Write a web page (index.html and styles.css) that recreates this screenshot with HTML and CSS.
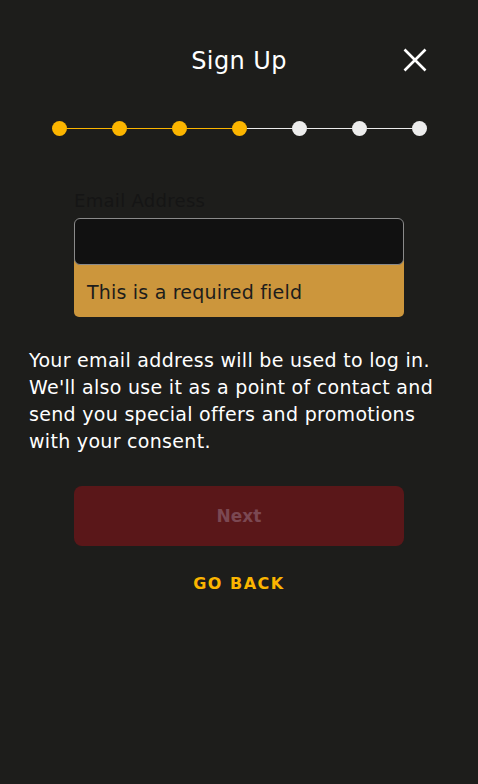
FILE: index.html
```html
<!DOCTYPE html>
<html lang="en">
<head>
    <meta charset="UTF-8">
    <meta name="viewport" content="width=device-width, initial-scale=1.0">
    <title>Sign Up</title>
    <link rel="stylesheet" href="styles.css">
</head>
<body>
    <div class="screen">
        <header class="top-bar">
            <h1 class="title">Sign Up</h1>
            <button class="close-btn" aria-label="Close">
                <svg width="24" height="24" viewBox="0 0 24 24">
                    <path d="M1.5 1.5 L22.5 22.5 M22.5 1.5 L1.5 22.5" stroke="#fff" stroke-width="2.6" stroke-linecap="butt" fill="none"/>
                </svg>
            </button>
        </header>

        <div class="stepper">
            <span class="dot done"></span>
            <span class="line done"></span>
            <span class="dot done"></span>
            <span class="line done"></span>
            <span class="dot done"></span>
            <span class="line done"></span>
            <span class="dot done"></span>
            <span class="line"></span>
            <span class="dot"></span>
            <span class="line"></span>
            <span class="dot"></span>
            <span class="line"></span>
            <span class="dot"></span>
        </div>

        <form class="form">
            <label class="field-label" for="email">Email Address</label>
            <div class="field">
                <input class="field-input" id="email" type="email">
                <div class="field-error">This is a required field</div>
            </div>
        </form>

        <p class="info">Your email address will be used to log in. We'll also use it as a point of contact and send you special offers and promotions with your consent.</p>

        <div class="actions">
            <button class="next-btn" disabled>Next</button>
            <a class="back-link" href="#">GO BACK</a>
        </div>
    </div>
</body>
</html>
```

FILE: styles.css
```css
body {
    margin: 0;
    background: #1d1d1b;
    font-family: 'DejaVu Sans', sans-serif;
    color: #fff;
}

.screen {
    min-height: 784px;
    box-sizing: border-box;
    padding: 0 29px;
}

.top-bar {
    height: 122px;
    position: relative;
    display: flex;
    justify-content: center;
    align-items: flex-start;
}

.title {
    margin: 45px 0 0;
    font-size: 24px;
    font-weight: 500;
    line-height: 32px;
    letter-spacing: 0.4px;
}

.close-btn {
    position: absolute;
    right: 22px;
    top: 48px;
    background: none;
    border: 0;
    padding: 0;
    width: 24px;
    height: 24px;
    cursor: pointer;
}

.stepper {
    display: flex;
    align-items: center;
    padding: 0 22px 0 23px;
    margin-top: -1px;
    height: 15px;
}

.dot {
    width: 15px;
    height: 15px;
    border-radius: 50%;
    background: #ececec;
    flex: none;
}

.dot.done {
    background: #fbb500;
}

.line {
    flex: 1;
    height: 1px;
    background: #ececec;
}

.line.done {
    background: #fbb500;
}

.form {
    margin: 52px 45px 0;
}

.field-label {
    display: block;
    color: #151515;
    font-size: 18px;
    line-height: 26px;
    letter-spacing: 0.3px;
    margin-bottom: 4px;
}

.field {
    position: relative;
}

.field-input {
    display: block;
    position: relative;
    z-index: 1;
    width: 100%;
    box-sizing: border-box;
    height: 47px;
    background: #111;
    border: 1px solid #8a8a8a;
    border-radius: 6px;
    outline: none;
    color: #fff;
    font: inherit;
}

.field-error {
    margin-top: -8px;
    padding: 23px 13px 13px;
    background: #cc963c;
    color: #1d1d1b;
    font-size: 19px;
    line-height: 24px;
    letter-spacing: 0.2px;
    border-radius: 0 0 5px 5px;
}

.info {
    margin: 30px 0 0;
    font-size: 19px;
    line-height: 27px;
    letter-spacing: 0.3px;
    font-weight: 500;
}

.actions {
    margin: 31px 45px 0;
    display: flex;
    flex-direction: column;
    align-items: center;
}

.next-btn {
    width: 100%;
    height: 60px;
    background: #5a1719;
    border: 0;
    border-radius: 8px;
    color: #7b4852;
    font-family: inherit;
    font-size: 17px;
    font-weight: bold;
}

.back-link {
    margin-top: 28px;
    color: #fbb500;
    font-size: 16px;
    font-weight: bold;
    letter-spacing: 1.5px;
    text-decoration: none;
}
```
